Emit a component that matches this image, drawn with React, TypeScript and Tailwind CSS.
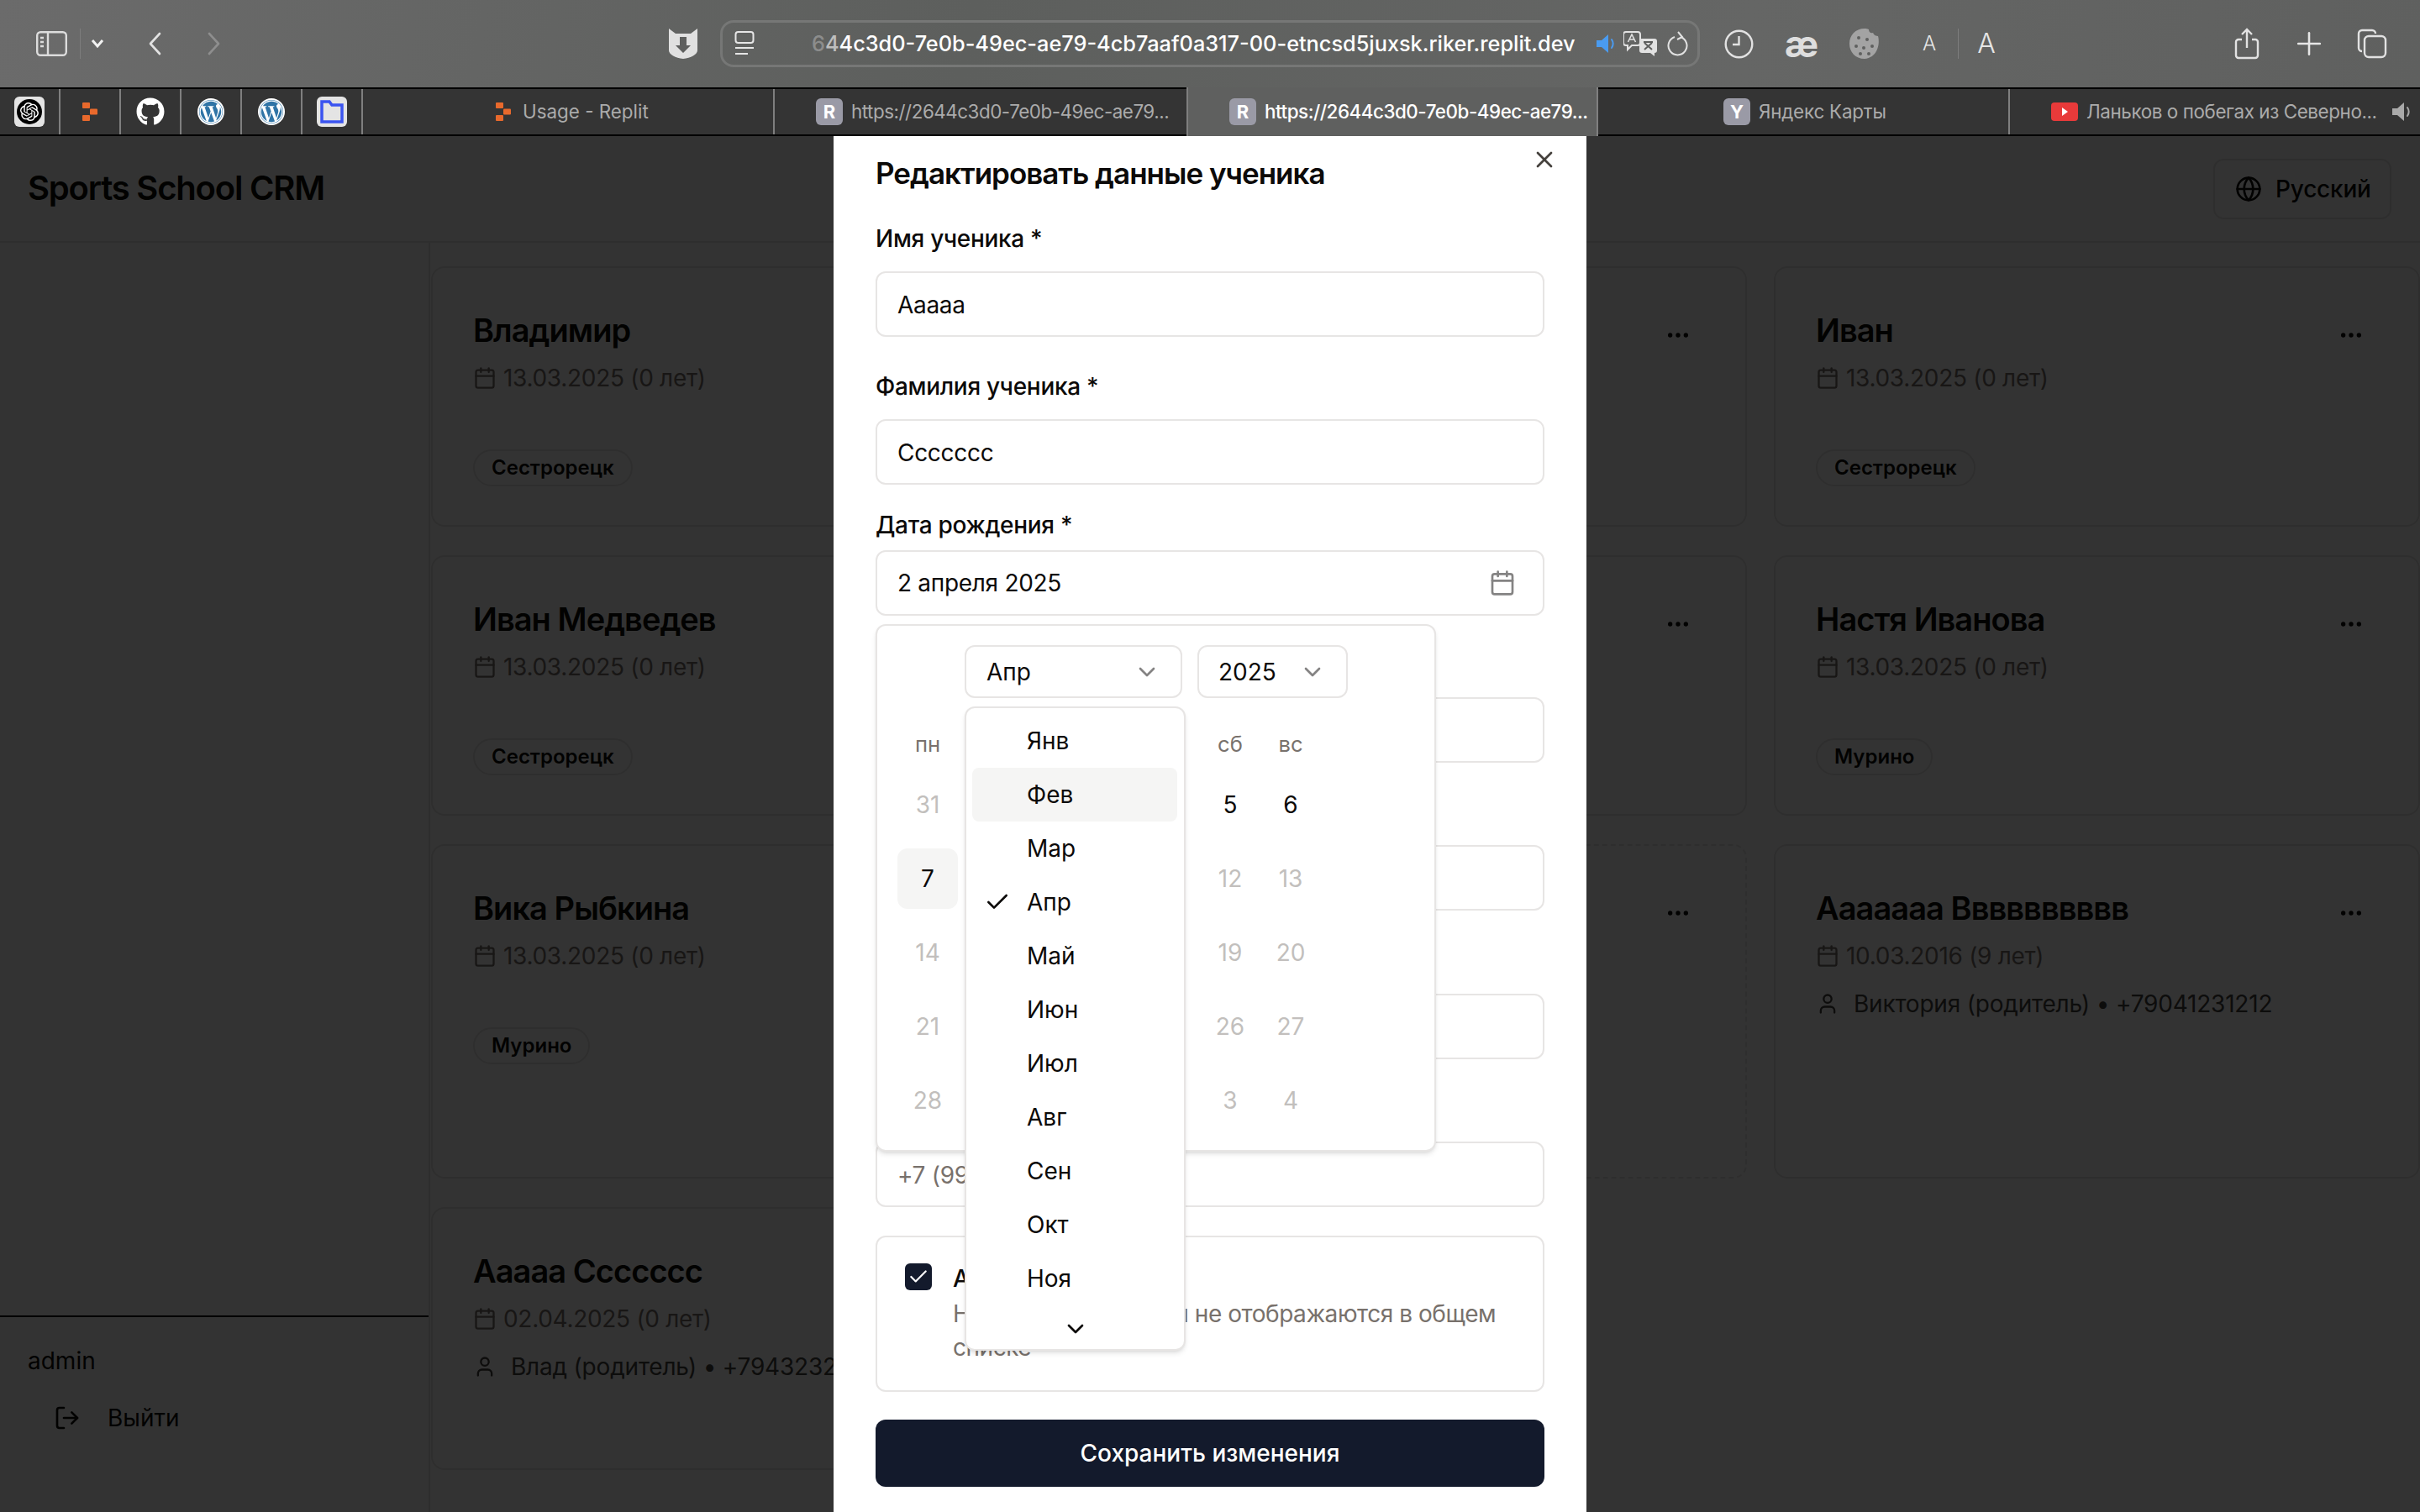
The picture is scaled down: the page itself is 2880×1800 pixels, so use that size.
import { Calendar, Check, ChevronDown, Ellipsis, Globe, LogOut, Plus, User, X } from 'lucide-react'
import { FaGithub, FaWordpressSimple } from 'react-icons/fa'
import { SiOpenai } from 'react-icons/si'

const students = [
  { name: 'Владимир', date: '13.03.2025 (0 лет)', branch: 'Сестрорецк' },
  { name: '' },
  { name: 'Иван', date: '13.03.2025 (0 лет)', branch: 'Сестрорецк' },
  { name: 'Иван Медведев', date: '13.03.2025 (0 лет)', branch: 'Сестрорецк' },
  { name: '' },
  { name: 'Настя Иванова', date: '13.03.2025 (0 лет)', branch: 'Мурино' },
  { name: 'Вика Рыбкина', date: '13.03.2025 (0 лет)', branch: 'Мурино' },
  { name: '', dashed: true },
  { name: 'Ааааааа Вввввввввв', date: '10.03.2016 (9 лет)', parent: 'Виктория (родитель) • +79041231212' },
  { name: 'Ааааа Ссссссс', date: '02.04.2025 (0 лет)', parent: 'Влад (родитель) • +79432321212' },
]

const months = ['Янв', 'Фев', 'Мар', 'Апр', 'Май', 'Июн', 'Июл', 'Авг', 'Сен', 'Окт', 'Ноя']

// the middle columns sit under the open month list
const weekdays = ['пн', '', '', '', '', 'сб', 'вс']
const weeks = [
  ['31', '', '', '', '', '5', '6'],
  ['7', '', '', '', '', '12', '13'],
  ['14', '', '', '', '', '19', '20'],
  ['21', '', '', '', '', '26', '27'],
  ['28', '', '', '', '', '3', '4'],
]

const tabs = [
  { title: 'Usage - Replit', pad: 'pl-[157px]', icon: 'replit', text: 'ml-[3px]' },
  { title: 'https://2644c3d0-7e0b-49ec-ae79...', pad: 'pl-[49px]', icon: 'R', text: 'tracking-[-0.47px]' },
  { title: 'https://2644c3d0-7e0b-49ec-ae79...', pad: 'pl-[49px]', icon: 'R', text: 'tracking-[-0.47px]', active: true },
  { title: 'Яндекс Карты', pad: 'pl-[149px]', icon: 'Y', text: 'tracking-[-0.2px]' },
  { title: 'Ланьков о побегах из Северно...', pad: 'pl-[49px]', icon: 'yt', text: 'tracking-[-0.4px]' },
]

function ReplitLogo() {
  return (
    <svg className="shrink-0" width="20" height="22" viewBox="0 0 20 22" fill="#e8692c">
      <rect x="1" y="0" width="9" height="7" rx="1" />
      <rect x="10" y="7.5" width="9" height="7" rx="1" />
      <rect x="1" y="15" width="9" height="7" rx="1" />
    </svg>
  )
}

function Speaker({ color }: { color: string }) {
  return (
    <svg width="30" height="30" viewBox="0 0 30 30" fill="none">
      <path d="M3 11h6l8-7v22l-8-7H3z" fill={color} />
      <path d="M21 10c2 3 2 7 0 10" stroke={color} strokeWidth="2" strokeLinecap="round" />
    </svg>
  )
}

function Toolbar() {
  return (
    <div className="flex h-[104px] items-center bg-[linear-gradient(100deg,#6b6b6b_0%,#5d5f5d_40%,#656665_72%,#5f605f_100%)] text-[#e2e2e2]">
      <svg className="ml-[43px] shrink-0" width="37" height="30" viewBox="0 0 37 30" fill="none" stroke="#dcdcdc" strokeWidth="2.4">
        <rect x="1.2" y="1.2" width="34.6" height="27.6" rx="4" />
        <path d="M14 1v28" />
        <path d="M5 8h4M5 13h4M5 18h4" />
      </svg>
      <div className="ml-[15px] h-[36px] w-[1px] bg-[#7d7d7d]" />
      <svg className="ml-[12px] shrink-0" width="16" height="12" viewBox="0 0 16 12" fill="none" stroke="#f2f2f2" strokeWidth="3">
        <path d="M2 2l6 7 6-7" />
      </svg>
      <svg className="ml-[52px] shrink-0" width="16" height="28" viewBox="0 0 16 28" fill="none" stroke="#e2e2e2" strokeWidth="2.6" strokeLinecap="round" strokeLinejoin="round">
        <path d="M14 2L3 14l11 12" />
      </svg>
      <svg className="ml-[55px] shrink-0" width="16" height="28" viewBox="0 0 16 28" fill="none" stroke="#8e8e8e" strokeWidth="2.6" strokeLinecap="round" strokeLinejoin="round">
        <path d="M2 2l11 12L2 26" />
      </svg>
      <svg className="ml-[532px] shrink-0" width="36" height="36" viewBox="0 0 36 36">
        <path d="M1 0l8 6h18l8-6v26c0 5-8 9-17 10C9 35 1 31 1 26z" fill="#e0e0e0" />
        <path d="M14 10h8v10h5l-9 9-9-9h5z" fill="#5e5f5e" />
      </svg>
      <div className="ml-[26px] flex h-[56px] w-[1166px] shrink-0 items-center rounded-[16px] border-[3px] border-[#767776] pl-[14px]">
        <svg className="shrink-0" width="24" height="30" viewBox="0 0 24 30" fill="none" stroke="#e6e6e6" strokeWidth="2">
          <rect x="1.5" y="1" width="21" height="13" rx="3" />
          <path d="M1 20h22M1 27h15" />
        </svg>
        <div className="ml-[68px] shrink-0 whitespace-nowrap text-[25.3px] font-medium text-white">
          <span className="text-white/30">6</span>
          <span className="text-white/60">4</span>
          4c3d0-7e0b-49ec-ae79-4cb7aaf0a317-00-etncsd5juxsk.riker.replit.dev
        </div>
        <div className="ml-[22px] shrink-0">
          <Speaker color="#4a9bf0" />
        </div>
        <svg className="ml-[5px] shrink-0" width="40" height="30" viewBox="0 0 40 30">
          <path d="M3 1h14a3 3 0 013 3v10a3 3 0 01-3 3h-7l-5 5v-5H3a3 3 0 01-3-3V4a3 3 0 013-3z" fill="none" stroke="#e2e2e2" strokeWidth="2" />
          <path d="M22 9h15a3 3 0 013 3v11a3 3 0 01-3 3v4l-5-4H22a3 3 0 01-3-3V12a3 3 0 013-3z" fill="#e2e2e2" />
          <path d="M5.5 13L10 4l4.5 9M7 10h6" fill="none" stroke="#e2e2e2" strokeWidth="1.6" />
          <path d="M25 14l9 8M34 14l-9 8M24 13h11" fill="none" stroke="#5e5f5e" strokeWidth="2" />
        </svg>
        <svg className="ml-[12px] shrink-0" width="26" height="30" viewBox="0 0 26 30" fill="none" stroke="#e2e2e2" strokeWidth="2">
          <path d="M9 7a11 11 0 107 0" />
          <path d="M13 1l5 6-6 3" />
        </svg>
      </div>
      <svg className="ml-[29px] shrink-0" width="35" height="35" viewBox="0 0 35 35" fill="none" stroke="#e2e2e2" strokeWidth="2.4">
        <circle cx="17.5" cy="17.5" r="15.8" />
        <path d="M17.5 8v10H10" />
      </svg>
      <div className="ml-[36px] w-[42px] shrink-0 text-center text-[44px] font-bold leading-none text-[#dedede]">æ</div>
      <svg className="ml-[35px] shrink-0" width="38" height="38" viewBox="0 0 38 38" fill="#a3a3a3">
        <path d="M19 1c2 0 3 0 5 1 0 4 3 5 5 4 1 3 4 4 6 4 3 11-2 26-16 27C8 37 1 29 1 19S8 1 19 1z" />
        <g fill="#5f605f">
          <circle cx="12" cy="12" r="2" />
          <circle cx="22" cy="14" r="2" />
          <circle cx="9" cy="22" r="2" />
          <circle cx="18" cy="24" r="2" />
          <circle cx="28" cy="22" r="2" />
          <circle cx="14" cy="31" r="2" />
          <circle cx="24" cy="31" r="2" />
        </g>
      </svg>
      <div className="ml-[46px] w-[24px] shrink-0 text-center text-[24px] font-light text-[#e6e6e6]">A</div>
      <div className="ml-[22px] h-[36px] w-[1px] shrink-0 bg-[#7d7d7d]" />
      <div className="ml-[19px] w-[28px] shrink-0 text-center text-[32px] font-light text-[#e6e6e6]">A</div>
      <svg className="ml-[281px] shrink-0" width="30" height="38" viewBox="0 0 30 38" fill="none" stroke="#e2e2e2" strokeWidth="2.4">
        <path d="M9 14H5a3 3 0 00-3 3v16a3 3 0 003 3h20a3 3 0 003-3V17a3 3 0 00-3-3h-4" />
        <path d="M15 24V2M9 8l6-6 6 6" />
      </svg>
      <Plus className="ml-[37px] shrink-0" size={44} strokeWidth={1.4} color="#e6e6e6" />
      <svg className="ml-[35px] shrink-0" width="36" height="36" viewBox="0 0 36 36" fill="none" stroke="#e2e2e2" strokeWidth="2.4">
        <path d="M6 27a4 4 0 01-4-4V6a4 4 0 014-4h12a4 4 0 014 4" />
        <rect x="9" y="9" width="25" height="25" rx="5" />
      </svg>
    </div>
  )
}

function TabIcon({ kind }: { kind: string }) {
  if (kind === 'replit') return <ReplitLogo />
  if (kind === 'yt') {
    return (
      <div className="flex h-[22px] w-[32px] shrink-0 items-center justify-center rounded-[4px] bg-[#e83a3a]">
        <div className="h-0 w-0 border-y-[5px] border-l-[7px] border-y-transparent border-l-white" />
      </div>
    )
  }
  return (
    <div className="flex h-[32px] w-[32px] shrink-0 items-center justify-center rounded-[6px] bg-[#9a9aa6] text-[22px] font-bold text-white">
      {kind}
    </div>
  )
}

function Bookmark({ children }: { children: React.ReactNode }) {
  return <div className="flex w-[72px] shrink-0 items-center justify-center border-r-2 border-[#7f7f7f]">{children}</div>
}

function WordpressIcon() {
  return (
    <div className="flex h-[32px] w-[32px] items-center justify-center rounded-full bg-white">
      <div className="flex h-[28px] w-[28px] items-center justify-center rounded-full bg-[#2f74a6] text-white">
        <FaWordpressSimple size={28} />
      </div>
    </div>
  )
}

function TabBar() {
  return (
    <div className="flex h-[58px] border-y-2 border-black bg-[#343434]">
      <Bookmark>
        <div className="flex h-[36px] w-[36px] items-center justify-center rounded-[6px] bg-[#e4e4e4]">
          <div className="flex h-[30px] w-[30px] items-center justify-center rounded-full bg-black text-white">
            <SiOpenai size={22} />
          </div>
        </div>
      </Bookmark>
      <Bookmark>
        <ReplitLogo />
      </Bookmark>
      <Bookmark>
        <FaGithub size={34} color="#ffffff" />
      </Bookmark>
      <Bookmark>
        <WordpressIcon />
      </Bookmark>
      <Bookmark>
        <WordpressIcon />
      </Bookmark>
      <Bookmark>
        <div className="flex h-[36px] w-[36px] items-center justify-center rounded-[6px] bg-[#e4e4e4]">
          <svg width="30" height="30" viewBox="0 0 30 30" fill="#e4e4e4" stroke="#3b54f0" strokeWidth="3.5">
            <path d="M3 3h9l3 4h12v20H3z" />
          </svg>
        </div>
      </Bookmark>
      {tabs.map((tab, i) => (
        <div
          key={i}
          className={
            tab.active
              ? `-mt-[2px] flex h-[58px] w-[490px] shrink-0 items-center gap-[10px] border-x-2 border-[#7f7f7f] bg-[#5f605f] font-medium text-white ${tab.pad}`
              : `flex w-[490px] shrink-0 items-center gap-[10px] text-[#ababab] ${tab.pad} ${i < 4 && i !== 1 ? 'border-r-2 border-[#7f7f7f]' : ''}`
          }
        >
          <TabIcon kind={tab.icon} />
          <span className={`whitespace-nowrap text-[22.4px] ${tab.text}`}>{tab.title}</span>
          {tab.icon === 'yt' && (
            <div className="ml-[5px] shrink-0">
              <Speaker color="#a9a9a9" />
            </div>
          )}
        </div>
      ))}
    </div>
  )
}

function StudentCard({ student }: { student: (typeof students)[number] }) {
  return (
    <div className={`rounded-[16px] border-2 border-[#e7e5e4] bg-white p-[48px] ${student.dashed ? 'border-dashed' : ''}`}>
      <div className="flex justify-between">
        <div className="-mt-[2px] h-[56px] whitespace-nowrap text-[38px] font-semibold leading-[56px] tracking-[-0.95px] text-[#0c0a09]">
          {student.name}
        </div>
        <div className="flex h-[64px] w-[64px] items-center justify-center text-[#0c0a09]">
          <Ellipsis size={32} />
        </div>
      </div>
      {student.date && (
        <div className="-mt-[1px] flex h-[40px] items-center gap-[8px] text-[28px] tracking-[-0.3px] text-[#78716c]">
          <Calendar size={28} />
          {student.date}
        </div>
      )}
      {student.parent && (
        <div className="mt-[17px] flex h-[40px] items-center gap-[17px] whitespace-nowrap text-[28px] tracking-[-0.2px] text-[#44403c]">
          <User size={28} />
          {student.parent}
        </div>
      )}
      {student.branch && (
        <div className="mt-[65px] flex h-[44px] w-fit items-center rounded-full border-2 border-[#e7e5e4] px-[20px] text-[24px] font-semibold text-[#0c0a09]">
          {student.branch}
        </div>
      )}
    </div>
  )
}

function Page() {
  return (
    <div className="flex h-full flex-col bg-white">
      <div className="flex h-[127px] shrink-0 items-center justify-between border-b-2 border-[#e7e5e4] pl-[33px] pr-[34px]">
        <div className="-mt-[2px] text-[40px] font-semibold tracking-[-1.2px] text-[#0c0a09]">Sports School CRM</div>
        <div className="flex h-[72px] w-[212px] items-center gap-[16px] rounded-[12px] border-2 border-[#e7e5e4] pl-[24px] text-[28px] font-medium tracking-[-0.2px] text-[#0c0a09]">
          <Globe size={32} />
          Русский
        </div>
      </div>
      <div className="flex min-h-0 flex-1">
        <aside className="flex w-[512px] shrink-0 flex-col justify-end border-r-2 border-[#e7e5e4]">
          <div className="h-[234px] border-t-2 border-black pl-[33px]">
            <div className="mt-[32px] text-[28px] leading-[40px] text-[#0c0a09]">admin</div>
            <div className="mt-[28px] flex h-[40px] items-center gap-[32px] pl-[31px] text-[28px] text-[#0c0a09]">
              <LogOut size={32} />
              Выйти
            </div>
          </div>
        </aside>
        <main className="grid min-w-0 flex-1 grid-cols-[767px_767px_769px] grid-rows-[310px_310px_398px_313px] gap-x-[32px] gap-y-[34px] pl-[1px] pt-[28px]">
          {students.map((student, i) => (
            <StudentCard key={i} student={student} />
          ))}
        </main>
      </div>
    </div>
  )
}

function Field({ gap, labelGap, label, children }: { gap: string; labelGap: string; label?: string; children: React.ReactNode }) {
  return (
    <div className={gap}>
      <div className={`h-[40px] text-[28px] font-medium leading-[40px] tracking-[-0.3px] text-[#0c0a09] ${labelGap}`}>{label}</div>
      {children}
    </div>
  )
}

function Input({ value, muted }: { value?: string; muted?: boolean }) {
  return (
    <div className={`flex h-[78px] items-center rounded-[12px] border-2 border-[#e7e5e4] px-[24px] pt-[2px] text-[28px] tracking-[-0.3px] ${muted ? 'text-[#78716c]' : 'text-[#0c0a09]'}`}>
      {value}
    </div>
  )
}

function DatePicker() {
  return (
    <div className="absolute left-0 top-[138px] w-[667px] rounded-[12px] border-2 border-[#e7e5e4] bg-white px-[24px] pb-[23px] pt-[23px] shadow-md">
      <div className="ml-[80px] flex gap-[18px]">
        <div className="flex h-[63px] w-[259px] items-center justify-between rounded-[12px] border-2 border-[#e7e5e4] pl-[24px] pr-[24px] text-[28px] text-[#0c0a09]">
          Апр
          <ChevronDown size={32} className="opacity-50" />
        </div>
        <div className="flex h-[63px] w-[179px] items-center justify-between rounded-[12px] border-2 border-[#e7e5e4] pl-[23px] pr-[24px] text-[28px] text-[#0c0a09]">
          2025
          <ChevronDown size={32} className="opacity-50" />
        </div>
      </div>
      <div className="mt-[35px] flex h-[40px] items-center text-[25.6px] text-[#78716c]">
        {weekdays.map((day, i) => (
          <div key={i} className="w-[72px] text-center">
            {day}
          </div>
        ))}
      </div>
      {weeks.map((week, r) => (
        <div key={r} className="mt-[16px] flex">
          {week.map((day, c) => {
            const active = r === 0 && c > 4
            const today = r === 1 && c === 0
            return (
              <div
                key={c}
                className={`flex h-[72px] w-[72px] items-center justify-center rounded-[12px] text-[28px] ${
                  today ? 'bg-[#f5f5f4] text-[#0c0a09]' : active ? 'text-[#0c0a09]' : 'text-[#c2bfbd]'
                }`}
              >
                {day}
              </div>
            )
          })}
        </div>
      ))}
      <div className="absolute left-[104px] top-[96px] w-[263px] rounded-[12px] border-2 border-[#e7e5e4] bg-white px-[7px] pt-[7px] shadow-md">
        {months.map((month) => (
          <div
            key={month}
            className={`flex h-[64px] w-[244px] items-center rounded-[8px] text-[28px] text-[#0c0a09] ${month === 'Фев' ? 'bg-[#f5f5f4]' : ''}`}
          >
            <div className="w-[65px] shrink-0 pl-[14px]">{month === 'Апр' && <Check size={32} />}</div>
            {month}
          </div>
        ))}
        <div className="flex h-[52px] items-end justify-center pb-[8px] text-[#0c0a09]">
          <ChevronDown size={32} />
        </div>
      </div>
    </div>
  )
}

function Modal() {
  return (
    <div className="absolute left-[992px] top-0 h-full w-[896px] overflow-hidden bg-white pl-[50px] pr-[50px]">
      <X className="absolute right-[34px] top-[12px] text-[#44403c]" size={32} />
      <div className="mt-[22px] h-[46px] whitespace-nowrap text-[35px] font-semibold leading-[44px] tracking-[-1px] text-[#0c0a09]">
        Редактировать данные ученика
      </div>
      <Field gap="mt-[34px]" labelGap="mb-[19px]" label="Имя ученика *">
        <Input value="Ааааа" />
      </Field>
      <Field gap="mt-[39px]" labelGap="mb-[19px]" label="Фамилия ученика *">
        <Input value="Ссссссс" />
      </Field>
      <Field gap="relative z-10 mt-[28px]" labelGap="mb-[10px]" label="Дата рождения *">
        <div className="flex h-[78px] items-center justify-between rounded-[12px] border-2 border-[#e7e5e4] pl-[24px] pr-[32px] text-[28px] tracking-[-0.3px] text-[#0c0a09]">
          2 апреля 2025
          <Calendar size={32} className="text-[#0c0a09] opacity-50" />
        </div>
        <DatePicker />
      </Field>
      <Field gap="mt-[38px]" labelGap="mb-[19px]">
        <Input />
      </Field>
      <Field gap="mt-[39px]" labelGap="mb-[19px]">
        <Input />
      </Field>
      <Field gap="mt-[40px]" labelGap="mb-[19px]">
        <Input />
      </Field>
      <Field gap="mt-[39px]" labelGap="mb-[19px]">
        <Input value="+7 (999) 999-99-99" muted />
      </Field>
      <div className="mt-[34px] flex h-[186px] gap-[25px] rounded-[12px] border-2 border-[#e7e5e4] pl-[33px] pr-[32px] pt-[31px]">
        <div className="flex h-[32px] w-[32px] shrink-0 items-center justify-center rounded-[6px] bg-[#131a2c] text-white">
          <Check size={26} strokeWidth={2} />
        </div>
        <div>
          <div className="h-[40px] text-[28px] font-medium leading-[36px] text-[#0c0a09]">Активный ученик</div>
          <div className="text-[28px] leading-[40px] tracking-[-0.45px] text-[#78716c]">Неактивные ученики не отображаются в общем списке</div>
        </div>
      </div>
      <div className="mt-[33px] flex h-[80px] items-center justify-center rounded-[12px] bg-[#131a2c] text-[28px] font-medium text-white">
        Сохранить изменения
      </div>
    </div>
  )
}

export default function App() {
  return (
    <div className="h-[1800px] w-[2880px] overflow-hidden font-['Inter',sans-serif]">
      <Toolbar />
      <TabBar />
      <div className="relative h-[1638px] overflow-hidden">
        <Page />
        <div className="absolute inset-0 bg-black/80" />
        <Modal />
      </div>
    </div>
  )
}
